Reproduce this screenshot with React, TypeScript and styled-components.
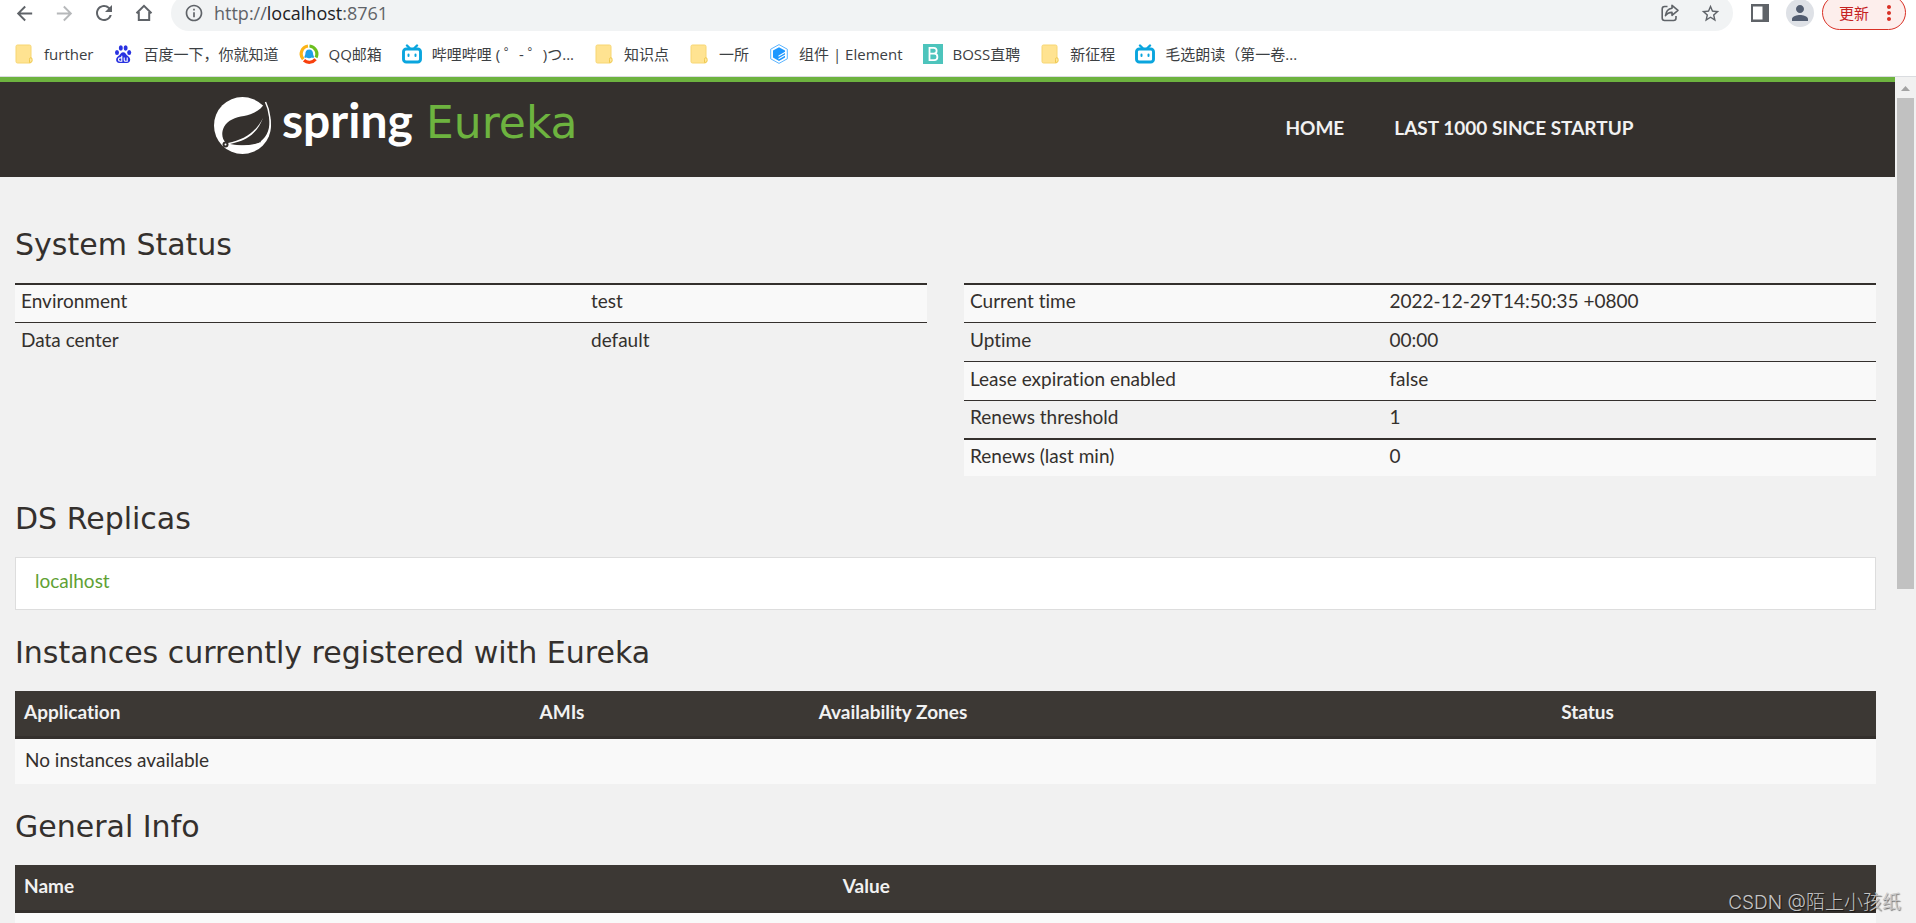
import React from 'react';
import styled, { createGlobalStyle, css } from 'styled-components';
import { MdArrowBack, MdArrowForward, MdRefresh, MdInfoOutline, MdStarBorder, MdPerson, MdMoreVert } from 'react-icons/md';

const chromeFont = "'Open Sans', 'Noto Sans CJK SC', sans-serif";
const bodyFont = "Lato, 'Noto Sans CJK SC', sans-serif";
const headingFont = "'DejaVu Sans', 'Noto Sans CJK SC', sans-serif";
const ink = '#34302d';
const green = '#6db33f';

const GlobalStyle = createGlobalStyle`
  *, *::before, *::after { box-sizing: border-box; }
  body { margin: 0; background: #f1f1f1; font-variant-ligatures: none; }
  button { font: inherit; color: inherit; border: 0; padding: 0; background: none; cursor: pointer; }
  a { color: inherit; text-decoration: none; }
`;

/* ---------- browser frame ---------- */

const Browser = styled.div`
  display: flex;
  flex-direction: column;
  height: 100vh;
  overflow: hidden;
  position: relative;
  font-family: ${chromeFont};
`;

const Toolbar = styled.div`
  display: flex;
  align-items: flex-end;
  flex: none;
  height: 31px;
  padding: 0 10px 0 4px;
  overflow: hidden;
  background: #fff;
  color: #5f6368;
`;

const ToolButton = styled.button<{ $faded?: boolean }>`
  display: flex;
  align-items: center;
  justify-content: center;
  flex: none;
  width: 40px;
  height: 36px;
  opacity: ${p => (p.$faded ? 0.45 : 1)};
`;

const Omnibox = styled.div`
  display: flex;
  align-items: center;
  flex: 1;
  min-width: 0;
  height: 36px;
  margin: 0 7px;
  padding: 0 3px 0 13px;
  border-radius: 18px;
  background: #f1f3f4;
`;

const Address = styled.div`
  flex: 1;
  margin-left: 10px;
  font-size: 18px;
  line-height: 24px;
  white-space: nowrap;
  b { font-weight: 400; color: #202124; }
`;

const Avatar = styled.button`
  display: flex;
  align-items: center;
  justify-content: center;
  flex: none;
  width: 28px;
  height: 28px;
  margin: 0 8px 4px 6px;
  border-radius: 50%;
  background: #dee1e6;
  color: #525d70;
`;

const UpdateButton = styled.button`
  display: flex;
  align-items: center;
  justify-content: space-between;
  flex: none;
  width: 84px;
  height: 35px;
  margin-bottom: 1px;
  padding: 0 4px 0 16px;
  border: 1px solid #d93025;
  border-radius: 18px;
  background: #fdeeec;
  color: #c5221f;
  font-size: 15px;
`;

const Bookmarks = styled.nav`
  display: flex;
  align-items: center;
  gap: 20px;
  flex: none;
  height: 46px;
  padding: 0 14px;
  border-bottom: 1px solid #dadce0;
  background: #fff;
`;

const Bookmark = styled.a`
  display: flex;
  align-items: center;
  gap: 10px;
  color: #3c4043;
  font-size: 15px;
  line-height: 20px;
  white-space: nowrap;
  svg { flex: none; }
`;

const Viewport = styled.div`
  display: flex;
  flex: 1;
  min-height: 0;
`;

const Page = styled.div`
  flex: 1;
  min-width: 0;
  overflow: hidden;
  background: #f1f1f1;
  color: ${ink};
  font: 19px/24px ${bodyFont};
  font-variant-ligatures: none;
`;

const ScrollTrack = styled.div`
  display: flex;
  flex-direction: column;
  align-items: center;
  flex: none;
  width: 21px;
  background: #f1f1f1;
`;

const ScrollArrow = styled.svg`
  flex: none;
  width: 21px;
  height: 21px;
`;

const ScrollThumb = styled.div`
  width: 17px;
  height: 58%;
  background: #c1c1c1;
`;

const Watermark = styled.div`
  position: absolute;
  right: 15px;
  bottom: 7px;
  color: #c4c4c4;
  font: 19px/26px Inter, 'Noto Sans CJK SC', sans-serif;
  font-weight: 300;
  text-shadow: 1px 1px 1px rgba(0, 0, 0, 0.6);
`;

/* ---------- Eureka page ---------- */

const Header = styled.header`
  height: 100px;
  border-top: 5px solid ${green};
  background: ${ink};
`;

const HeaderInner = styled.div`
  display: flex;
  align-items: flex-start;
  justify-content: space-between;
  max-width: 1468px;
  margin: 0 auto;
  padding: 5px 48px 0 0;
`;

const HeaderNav = styled.nav`
  display: flex;
  gap: 50px;
  padding-top: 29px;
  color: #f1f1f1;
  font-weight: 700;
  text-transform: uppercase;
`;

const Main = styled.main`
  padding: 25px 19px 0 15px;
`;

const Heading = styled.h1`
  margin: 25px 0 20px;
  font: 400 30px/36px ${headingFont};
`;

const Columns = styled.div`
  display: grid;
  grid-template-columns: 1fr 1fr;
  gap: 37px;
  align-items: start;
`;

const StatusTable = styled.table<{ $first: string }>`
  width: 100%;
  border-collapse: separate;
  border-spacing: 0;
  table-layout: fixed;
  th, td {
    height: 39px;
    padding: 0 6px 5px;
    border-top: 1px solid ${ink};
    text-align: left;
    font-weight: 400;
  }
  th { width: ${p => p.$first}; }
  tr:first-child > *, tr:nth-child(5) > * { border-top-width: 2px; }
  tr:nth-child(odd) { background: #f9f9f9; }
  tr:nth-child(n + 4) > * { height: 38px; }
`;

const ReplicaList = styled.div`
  padding: 11px 19px 16px;
  border: 1px solid #ddd;
  background: #fff;
  color: #5fa134;
`;

const DataTable = styled.table`
  width: 100%;
  border-collapse: separate;
  border-spacing: 0;
  table-layout: fixed;
  th, td {
    padding: 0 9px 4px;
    text-align: left;
  }
  th {
    height: 48px;
    border-bottom: 3px solid ${ink};
    background: #3c3834;
    color: #f1f1f1;
    font-weight: 700;
  }
  td {
    height: 45px;
    padding-left: 10px;
    background: #f9f9f9;
  }
`;

const Col = styled.col<{ $w: string }>`
  ${p => css`width: ${p.$w};`}
`;

/* ---------- drawings ---------- */

const HomeIcon = () => (
  <svg width="20" height="20" viewBox="0 0 20 20" fill="none" stroke="currentColor" strokeWidth="2">
    <path d="M2.5 10.2 10 2.8l7.5 7.4M4.8 9v8h10.4V9" />
  </svg>
);

const ShareIcon = () => (
  <svg width="20" height="20" viewBox="0 0 20 20" fill="none" stroke="currentColor" strokeWidth="1.6" strokeLinejoin="round">
    <path d="M7.5 3.5H4.6A2.4 2.4 0 0 0 2.2 5.900v9.200a2.400 2.400 0 0 0 2.400 2.400h9a2.400 2.400 0 0 0 2.400-2.400V13" />
    <path d="M12 2.300 18 7.300l-6 5V9.400c-3 0-5 .9-6.500 3.300.4-4 2.600-7 6.500-7.500z" />
  </svg>
);

const SidePanelIcon = () => (
  <svg width="18" height="18" viewBox="0 0 18 18">
    <path fill="currentColor" fillRule="evenodd" d="M0 0h18v18H0zM2 2.500v13h9.500v-13z" />
  </svg>
);

const FolderIcon = () => (
  <svg width="20" height="20" viewBox="0 0 20 20">
    <path d="M2 2.500Q2 1 3.500 1h12Q17 1 17 2.500V18q0 1-1 1H3.500Q2 19 2 17.500z" fill="#ffe391" stroke="#f7d673" />
    <path d="M15.500 18.500v-3.200q0-1.600 1.300-1.600t1.300 1.600v1.700q0 1.500-2.600 1.500z" fill="#ffe79e" stroke="#efc94f" />
  </svg>
);

const BaiduIcon = () => (
  <svg width="20" height="20" viewBox="0 0 20 20" fill="#2932e1">
    <ellipse cx="4" cy="8.500" rx="2" ry="2.600" />
    <ellipse cx="7.800" cy="4" rx="2" ry="2.700" />
    <ellipse cx="12.600" cy="4" rx="2" ry="2.700" />
    <ellipse cx="16.200" cy="8.500" rx="2" ry="2.600" />
    <path d="M10.200 8.300c-2 0-2.600 1.800-3.800 3-1.300 1.200-3.300 2-3.300 4.500 0 1.900 1.300 3.200 3.200 3.200h7.600c2 0 3.300-1.300 3.300-3.200 0-2.500-2-3.300-3.300-4.500-1.100-1.200-1.700-3-3.700-3z" />
    <path d="M8.800 11.800v5.500H7.200c-2.400 0-2.400-3.400 0-3.400h1.600M11.200 13.600v2.400q0 1.300 1.300 1.300h1.700v-3.700" fill="none" stroke="#fff" strokeWidth="1.100" />
  </svg>
);

const QQMailIcon = () => (
  <svg width="20" height="20" viewBox="0 0 20 20" fill="none">
    <path d="M4.200 15.200A8 8 0 0 1 9 2" stroke="#fcb316" strokeWidth="3.200" />
    <path d="M10.500 2A8 8 0 0 1 17 13.500" stroke="#6cbf1f" strokeWidth="3.200" />
    <path d="M16.500 15.300a8 8 0 0 1-11.500 1" stroke="#f8400d" strokeWidth="3.200" />
    <path d="M10.200 5.400c2.600 0 3.800 2 3.800 4.200 0 1.700 1 2.300 1 3.600 0 1-1.700.6-2.200.2-1 1-4.200 1-5.200 0-.5.400-2.200.8-2.200-.2 0-1.300 1-1.900 1-3.600 0-2.200 1.200-4.200 3.800-4.200z" fill="#1e9fe8" />
  </svg>
);

const BilibiliIcon = () => (
  <svg width="20" height="20" viewBox="0 0 20 20" fill="none" stroke="#0aa5de" strokeLinecap="round">
    <path d="M5 1.500 7.500 4M15 1.500 12.500 4" strokeWidth="2.400" />
    <rect x="1.500" y="5" width="17" height="13" rx="2.800" strokeWidth="2.900" />
    <path d="M6.500 10.500v1.600M13.500 10.500v1.600" strokeWidth="2" />
  </svg>
);

const ElementIcon = () => (
  <svg width="20" height="20" viewBox="0 0 20 20">
    <path d="M10 .6 18.300 5.200v9.600L10 19.400 1.700 14.800V5.200z" fill="#fff" stroke="#5bb4ff" />
    <path d="M10 3.200 16 6.500v1.300l-6.500 3.700v1.300L16 9.100v1.500l-6.500 3.700v1.200l6.500-3.700v1.800L10 16.900 4 13.500v-7z" fill="#1e98ff" />
  </svg>
);

const BossIcon = () => (
  <svg width="20" height="20" viewBox="0 0 20 20">
    <rect width="20" height="20" fill="#4dc4bc" />
    <path d="M6.500 3.800h4.200a2.900 2.900 0 0 1 0 5.900H6.500zM6.500 9.700h4.700a3.200 3.200 0 0 1 0 6.400H6.500z" fill="none" stroke="#fff" strokeWidth="1.800" />
  </svg>
);

const LogoText = styled.text<{ $brand?: boolean }>`
  fill: ${p => (p.$brand ? '#fff' : green)};
  font: ${p => (p.$brand ? `700 48px ${bodyFont}` : `400 44px ${headingFont}`)};
`;

const SpringLogo = () => (
  <svg width="372" height="80" viewBox="0 -10 372 80" role="img" aria-label="Spring Eureka">
    <circle cx="28.500" cy="28.500" r="28.500" fill="#fff" />
    <path d="M51.500 5C47 13 40 17 30 19c-9 1.500-16 4-20 11-3 6-2 12 2 16C22 49 39 50 47 45c8-6 10-16 8.500-25-.7-6-2-11-4-15z" fill={ink} />
    <path d="M49 21c-5 13-14 22-29 25l-6 1.500c9 1.500 24 2 33-2.500-6 6-12 8-19 8-8 0-14-2-18-5l4-2c16-3 28-11 35-25z" fill="#fff" />
    <path d="M51.500 5c2 4 3.500 9 4.200 15 1.300 9-.7 19-8.700 25" fill="none" stroke="#fff" strokeWidth="1.500" />
    <circle cx="11.500" cy="47.500" r="3" fill={ink} />
    <circle cx="11.500" cy="47.500" r="1" fill="#fff" />
    <LogoText $brand x="68" y="41">spring</LogoText>
    <LogoText x="212" y="41">Eureka</LogoText>
  </svg>
);

/* ---------- data ---------- */

const bookmarks: { label: string; icon: React.ReactNode }[] = [
  { label: 'further', icon: <FolderIcon /> },
  { label: '百度一下，你就知道', icon: <BaiduIcon /> },
  { label: 'QQ邮箱', icon: <QQMailIcon /> },
  { label: '哔哩哔哩 ( ゜- ゜)つ...', icon: <BilibiliIcon /> },
  { label: '知识点', icon: <FolderIcon /> },
  { label: '一所', icon: <FolderIcon /> },
  { label: '组件 | Element', icon: <ElementIcon /> },
  { label: 'BOSS直聘', icon: <BossIcon /> },
  { label: '新征程', icon: <FolderIcon /> },
  { label: '毛选朗读（第一卷...', icon: <BilibiliIcon /> },
];

const environment = [
  ['Environment', 'test'],
  ['Data center', 'default'],
];

const runtime = [
  ['Current time', '2022-12-29T14:50:35 +0800'],
  ['Uptime', '00:00'],
  ['Lease expiration enabled', 'false'],
  ['Renews threshold', '1'],
  ['Renews (last min)', '0'],
];

const Status = ({ rows, first }: { rows: string[][]; first: string }) => (
  <StatusTable $first={first}>
    <tbody>
      {rows.map(([name, value]) => (
        <tr key={name}>
          <th scope="row">{name}</th>
          <td>{value}</td>
        </tr>
      ))}
    </tbody>
  </StatusTable>
);

export default function App() {
  return (
    <>
      <GlobalStyle />
      <Browser>
        <Toolbar>
          <ToolButton aria-label="Back"><MdArrowBack size={23} /></ToolButton>
          <ToolButton aria-label="Forward" $faded><MdArrowForward size={23} /></ToolButton>
          <ToolButton aria-label="Reload"><MdRefresh size={24} /></ToolButton>
          <ToolButton aria-label="Home"><HomeIcon /></ToolButton>
          <Omnibox>
            <MdInfoOutline size={20} />
            <Address>http://<b>localhost</b>:8761</Address>
            <ToolButton aria-label="Share"><ShareIcon /></ToolButton>
            <ToolButton aria-label="Bookmark this page"><MdStarBorder size={21} /></ToolButton>
          </Omnibox>
          <ToolButton aria-label="Side panel"><SidePanelIcon /></ToolButton>
          <Avatar aria-label="Profile"><MdPerson size={24} /></Avatar>
          <UpdateButton>更新<MdMoreVert size={24} color="#d93025" /></UpdateButton>
        </Toolbar>
        <Bookmarks>
          {bookmarks.map(b => (
            <Bookmark key={b.label} href="#">{b.icon}{b.label}</Bookmark>
          ))}
        </Bookmarks>
        <Viewport>
          <Page>
            <Header>
              <HeaderInner>
                <a href="#"><SpringLogo /></a>
                <HeaderNav>
                  <a href="#">Home</a>
                  <a href="#">Last 1000 since startup</a>
                </HeaderNav>
              </HeaderInner>
            </Header>
            <Main>
              <Heading>System Status</Heading>
              <Columns>
                <Status rows={environment} first="62.5%" />
                <Status rows={runtime} first="46%" />
              </Columns>
              <Heading as="h2">DS Replicas</Heading>
              <ReplicaList><a href="#">localhost</a></ReplicaList>
              <Heading as="h2">Instances currently registered with Eureka</Heading>
              <DataTable>
                <colgroup><Col $w="27.7%" /><Col $w="15%" /><Col $w="39.9%" /><Col $w="17.4%" /></colgroup>
                <thead>
                  <tr>
                    <th scope="col">Application</th>
                    <th scope="col">AMIs</th>
                    <th scope="col">Availability Zones</th>
                    <th scope="col">Status</th>
                  </tr>
                </thead>
                <tbody>
                  <tr><td colSpan={4}>No instances available</td></tr>
                </tbody>
              </DataTable>
              <Heading as="h2">General Info</Heading>
              <DataTable>
                <colgroup><Col $w="44%" /><Col $w="56%" /></colgroup>
                <thead>
                  <tr><th scope="col">Name</th><th scope="col">Value</th></tr>
                </thead>
                <tbody>
                  <tr><td /><td /></tr>
                </tbody>
              </DataTable>
            </Main>
          </Page>
          <ScrollTrack>
            <ScrollArrow viewBox="0 0 21 21"><path d="M6 14 10.500 9l4.500 5z" fill="#a3a3a3" /></ScrollArrow>
            <ScrollThumb />
          </ScrollTrack>
        </Viewport>
        <Watermark>CSDN @陌上小孩纸</Watermark>
      </Browser>
    </>
  );
}
